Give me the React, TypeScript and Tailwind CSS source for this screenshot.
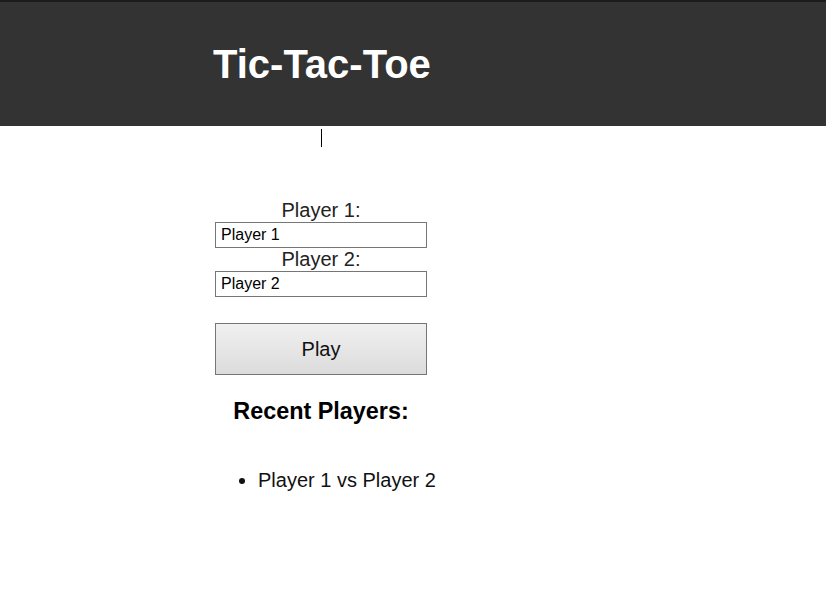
import React from 'react';

const players = ['Player 1 vs Player 2'];

export default function App() {
  return (
    <div className="min-h-[610px] bg-white font-['Liberation_Sans',Arial,sans-serif] text-[#111]">
      {/* Header */}
      <header className="flex h-[126px] items-center border-t-2 border-[#1c1c1c] bg-[#333333] pl-[213px]">
        <h1 className="text-[40px] font-bold leading-none text-white">Tic-Tac-Toe</h1>
      </header>

      {/* caret */}
      <div className="ml-[321px] mt-[3px] h-[18px] w-px bg-black" />

      {/* Form */}
      <div className="ml-[215px] mt-[52px] flex w-[212px] flex-col">
        <label className="text-center text-[20px] leading-[23px] text-[#222]">Player 1:</label>
        <input
          defaultValue="Player 1"
          className="h-[26px] w-full border border-[#767676] bg-white px-[5px] text-[16px] text-black outline-none"
        />
        <label className="text-center text-[20px] leading-[23px] text-[#222]">Player 2:</label>
        <input
          defaultValue="Player 2"
          className="h-[26px] w-full border border-[#767676] bg-white px-[5px] text-[16px] text-black outline-none"
        />
        <button className="mt-[26px] h-[52px] w-full border border-[#767676] bg-gradient-to-b from-[#f0f0f0] to-[#dcdcdc] text-[20px] text-[#111]">
          Play
        </button>
        <h3 className="mt-[23px] text-center text-[23.4px] font-bold leading-[27px] text-black">Recent Players:</h3>
        <ul className="mt-[44px] list-disc pl-[43px] text-[20px] leading-[23px] text-[#111]">
          {players.map((p, i) => (
            <li key={i} className="whitespace-nowrap">{p}</li>
          ))}
        </ul>
      </div>
    </div>
  );
}
